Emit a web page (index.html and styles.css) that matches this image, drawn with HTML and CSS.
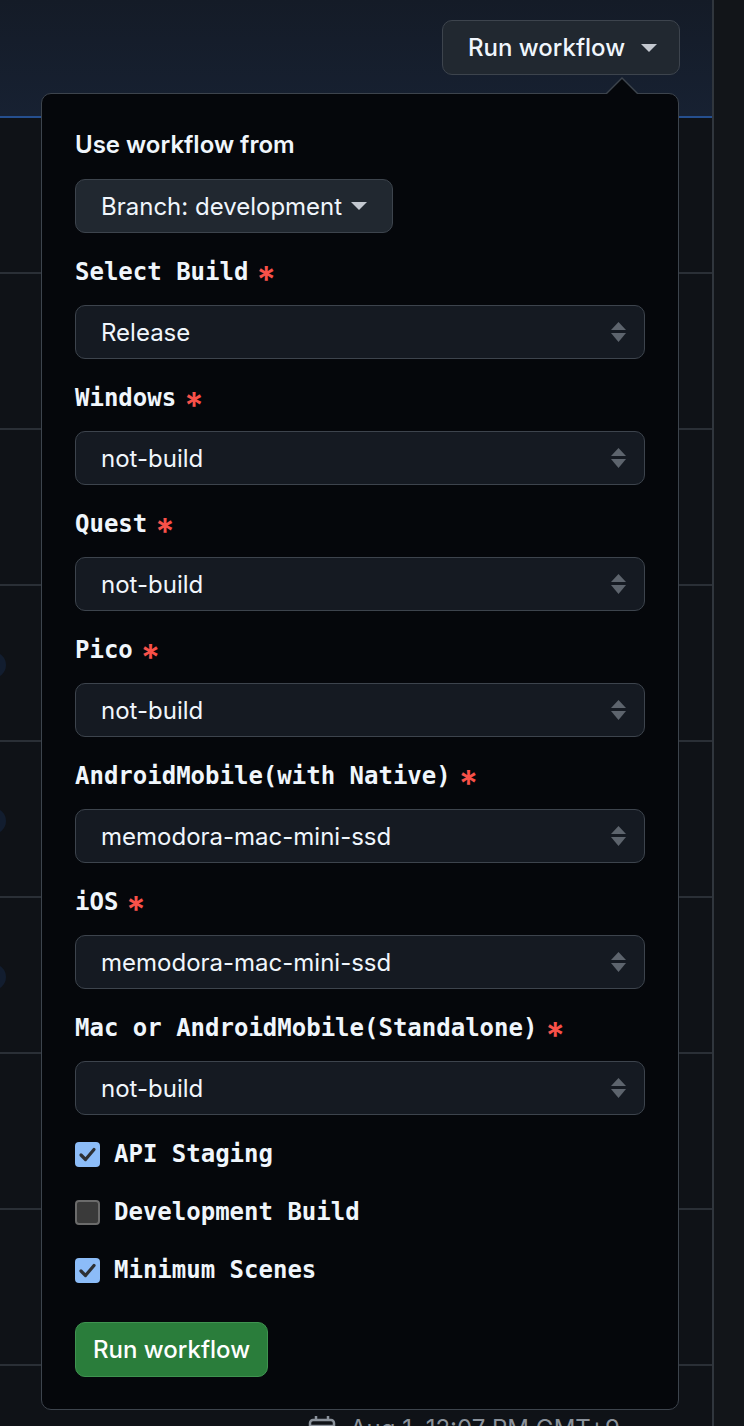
FILE: index.html
```html
<!DOCTYPE html>
<html lang="en">
<head>
<meta charset="utf-8">
<title>Run workflow</title>
<link rel="stylesheet" href="styles.css">
</head>
<body>
<div class="layout">
  <div class="main">
    <div class="header">
      <button class="btn top-btn">Run workflow<svg class="caret" width="16" height="8" viewBox="0 0 16 8"><polygon points="0,0 16,0 8,8"/></svg></button>
    </div>
    <div class="row"></div>
    <div class="row"></div>
    <div class="row"></div>
    <div class="row"><span class="badge"></span></div>
    <div class="row"><span class="badge"></span></div>
    <div class="row"><span class="badge"></span></div>
    <div class="row"></div>
    <div class="row"></div>
    <div class="row">
      <div class="meta">
        <svg class="cal" width="28" height="28" viewBox="0 0 28 28"><rect x="2" y="5" width="24" height="21" rx="3"/><line x1="2" y1="11" x2="26" y2="11"/><line x1="8" y1="1" x2="8" y2="6"/><line x1="20" y1="1" x2="20" y2="6"/></svg>
        <span>Aug 1, 12:07 PM GMT+9</span>
      </div>
    </div>
  </div>
  <div class="side"></div>
</div>

<form class="popover">
  <div class="popover-title">Use workflow from</div>
  <button type="button" class="btn branch-btn">Branch: development<svg class="caret" width="16" height="8" viewBox="0 0 16 8"><polygon points="0,0 16,0 8,8"/></svg></button>

  <div class="field">
    <div class="label">Select Build<span class="req">*</span></div>
    <div class="select"><span>Release</span><svg class="arrows" width="15" height="20" viewBox="0 0 15 20"><polygon points="0,8 7.5,0 15,8"/><polygon points="0,11 15,11 7.5,20"/></svg></div>
  </div>
  <div class="field">
    <div class="label">Windows<span class="req">*</span></div>
    <div class="select"><span>not-build</span><svg class="arrows" width="15" height="20" viewBox="0 0 15 20"><polygon points="0,8 7.5,0 15,8"/><polygon points="0,11 15,11 7.5,20"/></svg></div>
  </div>
  <div class="field">
    <div class="label">Quest<span class="req">*</span></div>
    <div class="select"><span>not-build</span><svg class="arrows" width="15" height="20" viewBox="0 0 15 20"><polygon points="0,8 7.5,0 15,8"/><polygon points="0,11 15,11 7.5,20"/></svg></div>
  </div>
  <div class="field">
    <div class="label">Pico<span class="req">*</span></div>
    <div class="select"><span>not-build</span><svg class="arrows" width="15" height="20" viewBox="0 0 15 20"><polygon points="0,8 7.5,0 15,8"/><polygon points="0,11 15,11 7.5,20"/></svg></div>
  </div>
  <div class="field">
    <div class="label">AndroidMobile(with Native)<span class="req">*</span></div>
    <div class="select"><span>memodora-mac-mini-ssd</span><svg class="arrows" width="15" height="20" viewBox="0 0 15 20"><polygon points="0,8 7.5,0 15,8"/><polygon points="0,11 15,11 7.5,20"/></svg></div>
  </div>
  <div class="field">
    <div class="label">iOS<span class="req">*</span></div>
    <div class="select"><span>memodora-mac-mini-ssd</span><svg class="arrows" width="15" height="20" viewBox="0 0 15 20"><polygon points="0,8 7.5,0 15,8"/><polygon points="0,11 15,11 7.5,20"/></svg></div>
  </div>
  <div class="field">
    <div class="label">Mac or AndroidMobile(Standalone)<span class="req">*</span></div>
    <div class="select"><span>not-build</span><svg class="arrows" width="15" height="20" viewBox="0 0 15 20"><polygon points="0,8 7.5,0 15,8"/><polygon points="0,11 15,11 7.5,20"/></svg></div>
  </div>

  <div class="checks">
    <div class="check"><span class="box on"><svg width="25" height="25" viewBox="0 0 25 25"><polyline points="6,13 10.5,17.5 19,7.5"/></svg></span><span>API Staging</span></div>
    <div class="check"><span class="box"></span><span>Development Build</span></div>
    <div class="check"><span class="box on"><svg width="25" height="25" viewBox="0 0 25 25"><polyline points="6,13 10.5,17.5 19,7.5"/></svg></span><span>Minimum Scenes</span></div>
  </div>

  <button type="button" class="btn primary-btn">Run workflow</button>
</form>
</body>
</html>
```

FILE: styles.css
```css
* { box-sizing: border-box; }

html, body {
  margin: 0;
  height: 1426px;
  overflow: hidden;
  background: #121519;
}

body {
  position: relative;
  font-family: Inter, "Noto Sans", sans-serif;
  color: #f0f6fc;
}

.layout {
  display: flex;
  height: 1426px;
}

.main {
  width: 714px;
  flex: none;
  background: #0f1217;
  border-right: 2px solid #30363d;
}

.side {
  flex: 1;
  background: #121519;
}

.header {
  height: 118px;
  background: linear-gradient(180deg, #141b27 0%, #172132 100%);
  border-bottom: 2px solid #254f8f;
  display: flex;
  justify-content: flex-end;
  align-items: flex-start;
  padding: 20px 32px 0 0;
}

.row {
  height: 156px;
  border-bottom: 2px solid #2a2f36;
  padding-top: 66px;
}

.badge {
  display: block;
  width: 40px;
  height: 26px;
  margin-left: -34px;
  border-radius: 13px;
  background: #121d2f;
}

.meta {
  display: flex;
  align-items: flex-start;
  gap: 14px;
  margin-top: -20px;
  padding-left: 308px;
  color: #8b929b;
  font-size: 24px;
  line-height: 34px;
}

.cal {
  margin-top: 3px;
  fill: none;
  stroke: #8b929b;
  stroke-width: 2.5;
}

.btn {
  display: flex;
  align-items: center;
  height: 55px;
  font-family: Inter, "Noto Sans", sans-serif;
  font-size: 24px;
  font-weight: 500;
  color: #f0f6fc;
  background: #212830;
  border: 1px solid #3d444d;
  border-radius: 10px;
  cursor: pointer;
  white-space: nowrap;
}

.caret { fill: #c3c8cf; flex: none; }

.top-btn {
  width: 238px;
  padding: 0 24px 0 25px;
  gap: 16px;
}

.popover {
  position: absolute;
  left: 41px;
  top: 93px;
  width: 638px;
  margin: 0;
  padding: 33px 33px 32px 33px;
  background: #05070b;
  border: 1px solid #3d444d;
  border-radius: 10px;
}

.popover::before,
.popover::after {
  content: "";
  position: absolute;
  width: 0;
  height: 0;
  border-style: solid;
  border-color: transparent;
}

.popover::before {
  top: -17px;
  left: 564px;
  border-width: 0 16px 16px 16px;
  border-bottom-color: #3d444d;
}

.popover::after {
  top: -15px;
  left: 565px;
  border-width: 0 15px 15px 15px;
  border-bottom-color: #05070b;
}

.popover-title {
  font-size: 24px;
  font-weight: 600;
  line-height: 34px;
  height: 34px;
  margin-top: 1px;
}

.branch-btn {
  margin-top: 17px;
  width: 318px;
  height: 54px;
  padding: 0 25px;
  gap: 9px;
  background: #212830;
  font-weight: 400;
}

.field { margin-top: 22px; }

.label {
  display: flex;
  align-items: center;
  height: 34px;
  font-family: "DejaVu Sans Mono", "Liberation Mono", monospace;
  font-weight: 700;
  font-size: 24px;
  line-height: 34px;
  margin-bottom: 16px;
  white-space: nowrap;
}

.req {
  font-family: Inter, "Noto Sans", sans-serif;
  color: #f85149;
  font-size: 36px;
  line-height: 36px;
  font-weight: 600;
  margin-left: 8px;
  position: relative;
  top: 7px;
}

.select {
  display: flex;
  align-items: center;
  justify-content: space-between;
  height: 54px;
  padding: 0 18px 0 25px;
  background: #151a22;
  border: 1px solid #3d444d;
  border-radius: 10px;
  font-size: 24px;
  color: #f0f6fc;
}

.arrows { fill: #5d646d; flex: none; }

.checks {
  margin-top: 22px;
  display: flex;
  flex-direction: column;
  gap: 24px;
}

.check {
  display: flex;
  align-items: center;
  gap: 14px;
  height: 34px;
  font-family: "DejaVu Sans Mono", "Liberation Mono", monospace;
  font-weight: 700;
  font-size: 24px;
}

.box {
  width: 25px;
  height: 25px;
  flex: none;
  border-radius: 4px;
  background: #3a3a3a;
  border: 2px solid #6b6b6b;
}

.box.on {
  background: #8cbcf8;
  border: none;
}

.box svg {
  display: block;
  fill: none;
  stroke: #2d3034;
  stroke-width: 3.2;
  stroke-linecap: round;
  stroke-linejoin: round;
}

.primary-btn {
  margin-top: 35px;
  height: 55px;
  padding: 0 17px;
  background: #2a7d3b;
  border-color: #3f9350;
  color: #ffffff;
  font-weight: 500;
}
```
